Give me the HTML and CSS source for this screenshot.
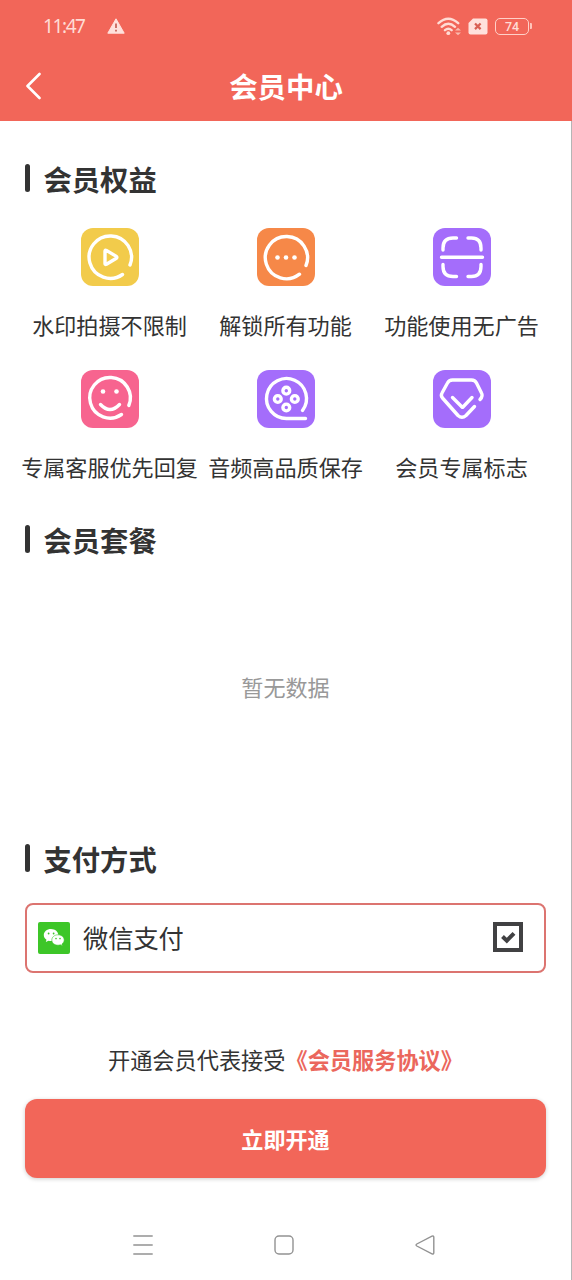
FILE: index.html
```html
<!DOCTYPE html>
<html lang="zh-CN">
<head>
<meta charset="utf-8">
<title>会员中心</title>
<link rel="stylesheet" href="styles.css">
</head>
<body>
<div class="screen">
  <header class="header">
    <div class="status">
      <span class="time">11:47</span>
      <svg class="warn" width="18" height="16" viewBox="0 0 18 16"><path d="M9 .8 17.2 15.2H.8Z" fill="#ffe1dc" stroke="#ffe1dc" stroke-width="1" stroke-linejoin="round"/><path d="M9 5.5v4.5M9 11.7v1.8" stroke="#c9665b" stroke-width="1.8"/></svg>
      <svg class="wifi" width="25" height="19" viewBox="0 0 25 19" fill="none" stroke="#ffdcd5" stroke-width="2.4" stroke-linecap="round"><path d="M1.5 6.2Q11.3-2.8 21.2 6.2M4.7 9.8Q11.3 3.8 18 9.8M8 13.2Q11.3 10.4 14.6 13.2"/><circle cx="11.3" cy="16.2" r="1.9" fill="#ffdcd5" stroke="none"/><path d="m18 13.6 3-2.8 3 2.8zM18 15.4l3 2.8 3-2.8z" fill="#f9bbb0" stroke="none"/></svg>
      <svg class="sim" width="20" height="17" viewBox="0 0 20 17"><path d="M5 .5h12.5q2 0 2 2v12q0 2-2 2h-15q-2 0-2-2V5Z" fill="#ffe1dc"/><path d="m7 5.5 5.6 5.6m0-5.6L7 11.1" stroke="#d95f53" stroke-width="2.2"/></svg>
      <span class="battery">74</span>
    </div>
    <div class="titlebar">
      <svg class="back" width="16" height="28" viewBox="0 0 16 28"><path d="M14.5 2 2.5 14l12 12" fill="none" stroke="#fff" stroke-width="2.6" stroke-linecap="round" stroke-linejoin="round"/></svg>
      <h1 class="title">会员中心</h1>
    </div>
  </header>

  <main class="content">
    <h2 class="heading">会员权益</h2>
    <div class="benefits">
      <div class="benefit">
        <svg class="tile yellow" viewBox="0 0 58 58"><path d="M41.5 46.5A21.2 21.2 0 1 1 49 37"/><path d="M24 23.2v12.2q0 1.5 1.4.8l10-6q1-.9 0-1.8l-10-6q-1.4-.7-1.4.8Z"/></svg>
        <span class="label">水印拍摄不限制</span>
      </div>
      <div class="benefit">
        <svg class="tile orange" viewBox="0 0 58 58"><path d="M42.5 46.2A21.1 21.1 0 1 1 49 37.5"/><g class="solid"><circle cx="20.5" cy="29.5" r="2.3"/><circle cx="29" cy="29.5" r="2.3"/><circle cx="37.5" cy="29.5" r="2.3"/></g></svg>
        <span class="label">解锁所有功能</span>
      </div>
      <div class="benefit">
        <svg class="tile purple" viewBox="0 0 58 58"><path d="M10 22v-2q0-10 10-10h3.5M35 10h3.5q9.5 0 9.500 10v2M10 36.500v2Q10 48.500 20 48.500h3.500M35 48.500h3.500q9.500 0 9.500-10v-2M8.500 29.300h41"/></svg>
        <span class="label">功能使用无广告</span>
      </div>
      <div class="benefit">
        <svg class="tile pink" viewBox="0 0 58 58"><path d="M40.500 44.500A20.300 20.300 0 1 1 47.800 35.500M19.500 34.500Q29 44.500 38.500 34.500"/><g class="solid"><circle cx="22" cy="21.500" r="2.300"/><circle cx="35.500" cy="21.500" r="2.300"/></g></svg>
        <span class="label">专属客服优先回复</span>
      </div>
      <div class="benefit">
        <svg class="tile purple" viewBox="0 0 58 58"><path d="M48.500 48.500H30A20 20 0 1 1 45.500 40.500"/><circle cx="29.300" cy="20.700" r="3.400"/><circle cx="20.800" cy="29" r="3.400"/><circle cx="37.800" cy="29" r="3.400"/><circle cx="29.300" cy="37.500" r="3.400"/></svg>
        <span class="label">音频高品质保存</span>
      </div>
      <div class="benefit">
        <svg class="tile purple" viewBox="0 0 58 58"><path d="M41.500 36.500 33 45.500q-4 3.500-8 0L9.500 28q-2-2.500-.5-5l5.500-10q1.500-3 5-3h19q3.500 0 5 3l5 10q1.800 3-1.500 6.500M19.500 27.500l9.500 9.500q.5.500 1 0l9-9.500"/></svg>
        <span class="label">会员专属标志</span>
      </div>
    </div>

    <h2 class="heading plans-heading">会员套餐</h2>
    <div class="empty">暂无数据</div>

    <h2 class="heading">支付方式</h2>
    <div class="pay">
      <svg class="wechat" width="32" height="32" viewBox="0 0 32 32"><rect width="32" height="32" rx="2" fill="#3dc628"/><path d="M13 7C8.800 7 5.800 9.700 5.800 13c0 1.900 1 3.600 2.700 4.700L7.800 20l2.700-1.300c.9.300 2 .4 3 .4 3.900-.2 6.800-2.800 6.800-6S17.200 7 13 7Z" fill="#fff"/><path d="M20 12.800c-3.500 0-6.200 2.300-6.200 5.200s2.700 5.200 6.200 5.200c.8 0 1.600-.1 2.300-.4l2.200 1.200-.6-2c1.400-1 2.300-2.400 2.300-4 0-2.900-2.800-5.200-6.200-5.200Z" fill="#fff" stroke="#3dc628" stroke-width=".6"/><g fill="#3dc628"><circle cx="10.600" cy="11.500" r=".9"/><circle cx="15.600" cy="11.500" r=".9"/><circle cx="18" cy="16.600" r=".8"/><circle cx="22" cy="16.600" r=".8"/></g></svg>
      <span class="pay-name">微信支付</span>
      <svg class="check" width="30" height="30" viewBox="0 0 30 30"><rect x="2" y="2" width="26" height="26" fill="#fff" stroke="#414143" stroke-width="4"/><path d="m9.500 14.500 4.300 4.200 7.200-7.400" fill="none" stroke="#414143" stroke-width="4"/></svg>
    </div>

    <p class="agreement">开通会员代表接受<a class="link"><span class="bracket">《</span>会员服务协议<span class="bracket">》</span></a></p>
    <button class="submit">立即开通</button>
  </main>

  <nav class="nav">
    <svg width="22" height="22" viewBox="0 0 22 22"><path d="M1.300 2h19.400M1.300 11h19.400M1.300 20h19.400"/></svg>
    <svg width="22" height="22" viewBox="0 0 22 22"><rect x="2" y="2" width="18" height="18" rx="4"/></svg>
    <svg width="22" height="22" viewBox="0 0 22 22"><path d="M2.800 10 18 2.200q1.800-.8 1.800 1v15.600q0 1.800-1.800 1L2.800 12q-1.500-1 0-2Z"/></svg>
  </nav>
</div>
</body>
</html>
```
FILE: styles.css
```css
* { box-sizing: border-box; }

body {
  margin: 0;
  background: #fff;
  color: #333;
  font-family: "Noto Sans CJK SC", sans-serif;
}

.screen {
  display: flex;
  flex-direction: column;
  height: 1280px;
  border-right: 1px solid #b5b5b5;
}

.header {
  height: 121px;
  background: #f26659;
  margin-right: -1px;
  color: #fff;
}

.status {
  display: flex;
  align-items: center;
  height: 52px;
  padding: 0 43px 0 43px;
}

.time {
  width: 64px;
  font: 19px/24px "Noto Sans", sans-serif;
  letter-spacing: -1.4px;
  color: #ffdcd5;
}

.wifi { margin-left: auto; }
.sim { margin: 0 7px 0 6px; }

.battery {
  position: relative;
  width: 34px;
  height: 17px;
  border: 1.5px solid #ffd0c8;
  border-radius: 5px;
  font: 500 12.5px/16px Roboto, sans-serif;
  text-align: center;
  color: #ffdcd5;
}

.battery::after {
  content: "";
  position: absolute;
  right: -4px;
  top: 4px;
  width: 2px;
  height: 6px;
  border-radius: 0 1px 1px 0;
  background: #ffc4ba;
}

.titlebar {
  display: grid;
  grid-template-columns: 60px 1fr 60px;
  align-items: center;
  height: 68px;
}

.back { margin-left: 25px; }

.title {
  margin: 0;
  font-size: 28.4px;
  line-height: 40px;
  font-weight: 700;
  text-align: center;
}

.content {
  padding: 38px 25px 0;
}

.heading {
  display: flex;
  align-items: center;
  gap: 13.5px;
  height: 40px;
  margin: 0;
  font-size: 28.3px;
  line-height: 40px;
  font-weight: 700;
}

.heading::before {
  content: "";
  width: 5px;
  height: 28px;
  margin-bottom: 2px;
  border-radius: 2.5px;
  background: #333;
}

.benefits {
  display: grid;
  grid-template-columns: repeat(3, 176px);
  row-gap: 30px;
  margin: 29px -3px 0 -3.5px;
}

.benefit {
  display: flex;
  flex-direction: column;
  align-items: center;
  gap: 22px;
}

.tile {
  width: 58px;
  height: 58px;
  border-radius: 12px;
  fill: none;
  stroke: #fff;
  stroke-width: 3.4px;
  stroke-linecap: round;
  stroke-linejoin: round;
}

.solid { fill: #fff; stroke: none; }
.yellow { background: #f2cb4b; }
.orange { background: #f68848; }
.purple { background: #a46dfb; }
.pink { background: #f7648f; }

.label {
  font-size: 22.1px;
  line-height: 32px;
  white-space: nowrap;
}

.plans-heading { margin-top: 38px; }

.empty {
  display: flex;
  align-items: center;
  justify-content: center;
  height: 279px;
  padding-bottom: 28px;
  font-size: 22.1px;
  color: #999;
}

.pay {
  display: flex;
  align-items: center;
  height: 70px;
  margin-top: 24px;
  padding: 0 21px 0 11px;
  border: 2px solid #dc7470;
  border-radius: 8px;
}

.pay-name {
  margin: -2px 0 0 13px;
  font-size: 25.2px;
  line-height: 36px;
}

.check { margin: -2px 0 0 auto; }

.agreement {
  margin: 70px 0 0;
  padding-left: 83px;
  font-size: 22.2px;
  line-height: 32px;
  white-space: nowrap;
}

.link {
  color: #eb675d;
  font-weight: 700;
}

.bracket { display: inline-block; }

.submit {
  display: block;
  width: 100%;
  height: 79px;
  margin-top: 24px;
  padding: 0 0 1px;
  border: 0;
  border-radius: 12px;
  background: #f26659;
  box-shadow: 0 1px 4px rgba(0, 0, 0, 0.2);
  font: 700 22.1px/32px "Noto Sans CJK SC", sans-serif;
  color: #fff;
}

.nav {
  display: flex;
  justify-content: space-between;
  margin-top: auto;
  padding: 0 135px 24px 132px;
  fill: none;
  stroke: #929292;
  stroke-width: 1.4px;
}
```
